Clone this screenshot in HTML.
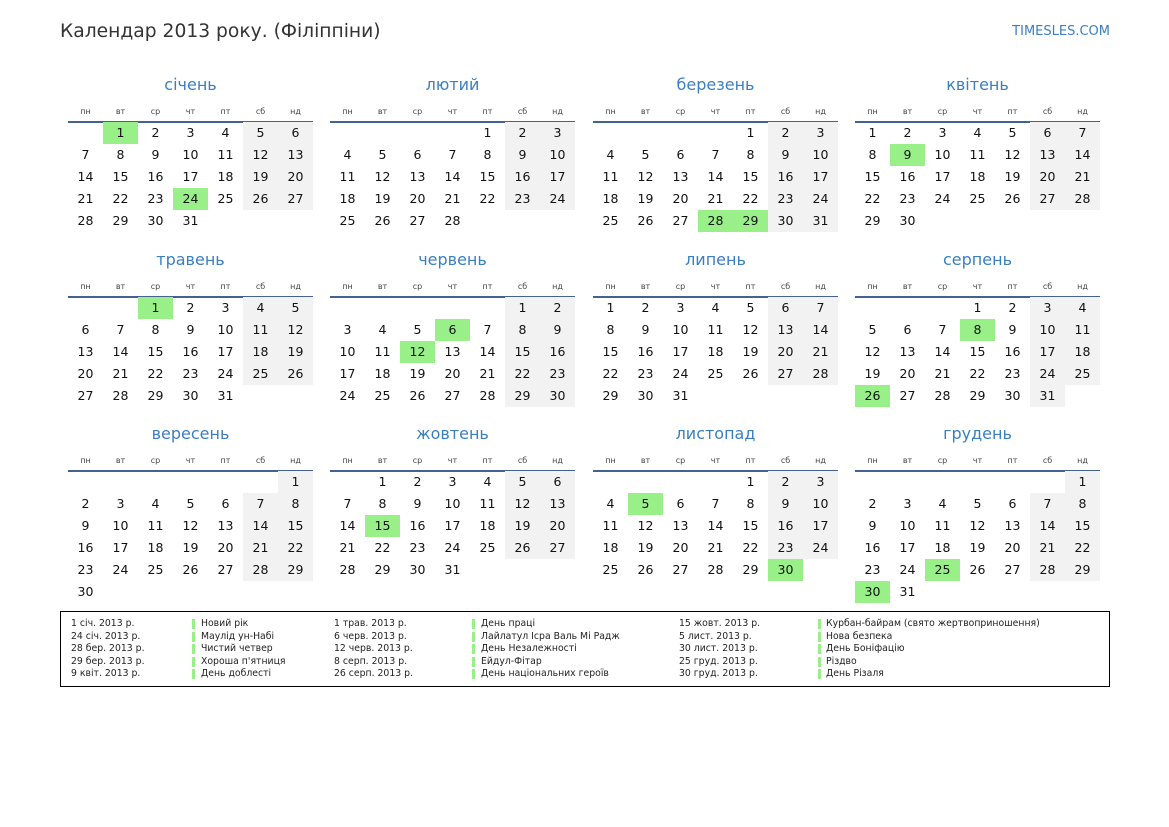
<!DOCTYPE html>
<html><head><meta charset="utf-8"><style>
body{margin:0;width:1169px;height:827px;background:#fff;font-family:"DejaVu Sans","Liberation Sans",sans-serif;position:relative;overflow:hidden}
.t{position:absolute;left:60px;top:21px;font-size:18.7px;color:#333}
.site{position:absolute;right:59px;top:24px;font-size:13px;color:#3a7fc1}
.m{position:absolute;width:245px}
.mt{position:absolute;top:-12px;width:100%;text-align:center;font-size:16px;color:#3a7fc1}
.wd{position:absolute;top:20px;left:0;width:100%;display:flex;font-size:8px;color:#444}
.wd span{width:35px;text-align:center}
.ln{position:absolute;top:34px;left:0;width:245px;height:2px;background:#44618f}
.c{position:absolute;width:35px;height:22px;line-height:22px;text-align:center;font-size:12.5px;color:#111}
.we{background:#f2f2f2}.h{background:#99ef88}
.lg{position:absolute;left:60px;top:611px;width:1048px;height:74px;border:1px solid #000;font-size:9.3px;color:#222}
.lg div{position:absolute;line-height:12.5px;white-space:pre}
.bar{position:absolute;width:3px;height:10px;background:#99ef88}
</style></head><body>
<div class="t">Календар 2013 року. (Філіппіни)</div>
<div class="site">TIMESLES.COM</div>
<div id="cal"></div>
<div class="lg">
<div style="left:10px;top:6px">1 січ. 2013 р.
24 січ. 2013 р.
28 бер. 2013 р.
29 бер. 2013 р.
9 квіт. 2013 р.</div>
<div style="left:140px;top:6px">Новий рік
Маулід ун-Набі
Чистий четвер
Хороша п'ятниця
День доблесті</div>
<div style="left:273px;top:6px">1 трав. 2013 р.
6 черв. 2013 р.
12 черв. 2013 р.
8 серп. 2013 р.
26 серп. 2013 р.</div>
<div style="left:420px;top:6px">День праці
Лайлатул Ісра Валь Мі Радж
День Незалежності
Ейдул-Фітар
День національних героїв</div>
<div style="left:618px;top:6px">15 жовт. 2013 р.
5 лист. 2013 р.
30 лист. 2013 р.
25 груд. 2013 р.
30 груд. 2013 р.</div>
<div style="left:765px;top:6px">Курбан-байрам (свято жертвоприношення)
Нова безпека
День Боніфацію
Різдво
День Різаля</div>
<span id="bars"></span>
</div>
<script>
var names=["січень","лютий","березень","квітень","травень","червень","липень","серпень","вересень","жовтень","листопад","грудень"];
var wd=["пн","вт","ср","чт","пт","сб","нд"];
var hol={"0-1":1,"0-24":1,"2-28":1,"2-29":1,"3-9":1,"4-1":1,"5-6":1,"5-12":1,"7-8":1,"7-26":1,"9-15":1,"10-5":1,"10-30":1,"11-25":1,"11-30":1};
var xs=[68,330,593,855],ys=[99,274,448],h="";
for(var m=0;m<12;m++){
 var x=xs[m%4],y=ys[Math.floor(m/4)]-12;
 h+='<div class="m" style="left:'+x+'px;top:'+(y)+'px"><div class="mt">'+names[m]+'</div><div class="wd">';
 for(var i=0;i<7;i++)h+='<span>'+wd[i]+'</span>';
 h+='</div><div class="ln"></div>';
 var f=(new Date(2013,m,1).getDay()+6)%7,n=new Date(2013,m+1,0).getDate();
 for(var d=1;d<=n;d++){var p=f+d-1,r=Math.floor(p/7),c=p%7;
  var cls="c"+(hol[m+"-"+d]?" h":(c>=5?" we":""));
  h+='<div class="'+cls+'" style="left:'+(c*35)+'px;top:'+(35+r*22)+'px">'+d+'</div>';}
 h+='</div>';
}
document.getElementById("cal").innerHTML=h;
var b="";[131,411,757].forEach(function(l){for(var i=0;i<5;i++)b+='<span class="bar" style="left:'+l+'px;top:'+(7+i*12.5)+'px"></span>';});
document.getElementById("bars").innerHTML=b;
</script>
</body></html>
